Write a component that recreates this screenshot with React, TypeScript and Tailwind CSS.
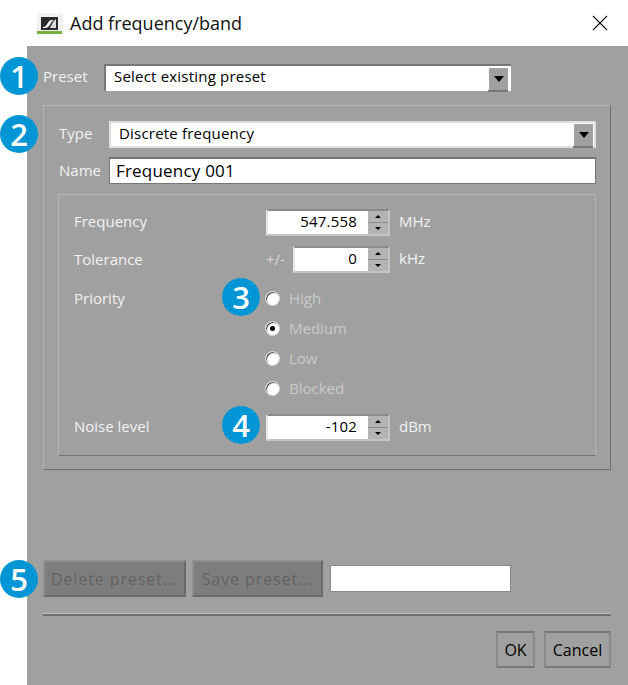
const FONT = "font-['Open_Sans','Noto_Sans',sans-serif]";

function Badge({ n, className }: { n: number; className: string }) {
  return (
    <div
      className={`absolute flex h-[38px] w-[38px] items-center justify-center rounded-full bg-[#0095d5] text-[31px] font-semibold leading-none text-white ${className}`}
    >
      {n}
    </div>
  );
}

function Arrow({ up, big }: { up?: boolean; big?: boolean }) {
  return (
    <svg width={big ? 10 : 6} height={big ? 6 : 3} viewBox="0 0 10 6" preserveAspectRatio="none" className="block">
      <polygon points={up ? "5,0 10,6 0,6" : "0,0 10,0 5,6"} fill="#000" />
    </svg>
  );
}

function Combo({ value, className, textClass }: { value: string; className: string; textClass: string }) {
  return (
    <div className={`flex items-center bg-white ${className}`}>
      <span className={`flex-1 text-[15px] tracking-[0.2px] text-black ${textClass}`}>{value}</span>
      <div className="flex h-[23px] w-[20px] items-center justify-center border-t border-l border-t-white border-l-white bg-[#a0a0a0] shadow-[0_2px_0_#777]">
        <Arrow big />
      </div>
    </div>
  );
}

function Spin({ value, unit, width }: { value: string; unit: string; width: string }) {
  return (
    <div className="flex h-[27px] items-center">
      <div className={`flex h-[27px] items-stretch border-2 border-[#c4c4c4] border-t-[#8a8a8a] border-l-[#e6e6e6] ${width}`}>
        <div className="flex flex-1 items-center justify-end bg-white pb-[2px] pr-[11px] text-[15px] tracking-[0.2px] text-black">{value}</div>
        <div className="flex w-[20px] flex-col gap-px bg-[#8c8c8c]">
          <div className="flex flex-1 items-center justify-center bg-[#b4b4b4]">
            <Arrow up />
          </div>
          <div className="flex flex-1 items-center justify-center bg-[#b4b4b4]">
            <Arrow />
          </div>
        </div>
      </div>
      <span className="ml-[9px] pb-[2px] text-[15px] text-[#f2f2f2]">{unit}</span>
    </div>
  );
}

function Radio({ label, checked }: { label: string; checked?: boolean }) {
  return (
    <div className="flex h-[30px] items-center">
      <div className="ml-[-1px] mr-px flex h-[15px] w-[15px] items-center justify-center rounded-full border border-[#d8d8d8] bg-white shadow-[inset_1px_1px_0_#4a4a4a]">
        {checked && <div className="h-[5px] w-[5px] rounded-full bg-black" />}
      </div>
      <span className="ml-[8px] text-[15px] text-[#c9c9c9]">{label}</span>
    </div>
  );
}

function DisabledButton({ label, width }: { label: string; width: string }) {
  return (
    <div
      className={`flex h-[37px] items-center justify-center border-2 border-[#8f8f8f] border-r-[#6a6a6a] border-b-[#6a6a6a] bg-[#7d7d7d] text-[16px] tracking-[0.9px] text-[#636363] ${width}`}
    >
      {label}
    </div>
  );
}

function OkButton({ label, width }: { label: string; width: string }) {
  return (
    <div
      className={`flex h-[37px] items-center justify-center border-2 border-[#777] border-r-[#8a8a8a] border-l-[#8a8a8a] bg-[#a0a0a0] text-[16px] text-black ${width}`}
    >
      {label}
    </div>
  );
}

export default function App() {
  return (
    <div className={`relative flex h-[685px] w-[628px] flex-col overflow-hidden bg-white ${FONT}`}>
      {/* title bar */}
      <div className="flex h-[46px] flex-none items-center pl-[37px] pr-[20px]">
        <svg width="26" height="22" viewBox="0 0 26 22" className="mb-[-1px]">
          <rect x="0" y="0" width="26" height="18" fill="#f2f2f2" />
          <rect x="4" y="4" width="17" height="13" fill="#2b2b2b" />
          <path d="M6 14 C11 14 10 7 15 7 L18 7 C13 7 14 15 8 15 L6 15 Z" fill="#f4f4f4" />
          <path d="M16 9 L19 6 L19 15 L13 15 Z" fill="#d8d8d8" />
          <rect x="0" y="18" width="25" height="3" fill="#76b043" />
        </svg>
        <span className="ml-[7px] flex-1 text-[18px] leading-none text-[#111]">Add frequency/band</span>
        <svg width="16" height="16" viewBox="0 0 16 16">
          <path d="M1 1 L15 15 M15 1 L1 15" stroke="#111" strokeWidth="1.1" />
        </svg>
      </div>

      {/* dialog body */}
      <div className="relative ml-[27px] flex-1 bg-[#a0a0a0] pt-[18px] pl-[16px] pr-[17px] text-[15px] text-[#f2f2f2]">
        {/* preset */}
        <div className="flex h-[26px] items-center">
          <span className="w-[61px] pb-[2px]">Preset</span>
          <Combo
            value="Select existing preset"
            className="h-[27px] w-[407px] border-t-2 border-l-2 border-t-[#777] border-l-[#777] pr-[3px]"
            textClass="pl-[8px] pb-[3px]"
          />
        </div>

        {/* group */}
        <div className="mt-[15px] h-[365px] border border-[#b4b4b4] border-r-[#707070] border-b-[#707070] pt-[15px] pl-[14px] pr-[14px]">
          <div className="flex h-[26px] items-center">
            <span className="w-[51px] pl-[1px] pb-[1px]">Type</span>
            <Combo
              value="Discrete frequency"
              className="h-[27px] flex-1 border-2 border-[#e0e0e0] border-t-[#dedede] pr-[1px]"
              textClass="pl-[8px] pb-[2px]"
            />
          </div>
          <div className="mt-[10px] flex h-[27px] items-center">
            <span className="w-[51px] pl-[1px]">Name</span>
            <div className="flex h-[27px] flex-1 items-center border border-t-2 border-[#777] bg-white pl-[6px] text-[17px] tracking-[0.2px] text-black">
              Frequency 001
            </div>
          </div>

          {/* frequency settings */}
          <div className="mt-[10px] h-[262px] border border-[#b4b4b4] border-b-[#707070] border-r-[#b4b4b4] pl-[15px]">
            <div className="mt-[14px] flex h-[27px] items-center">
              <span className="w-[192px] pb-[2px]">Frequency</span>
              <Spin value="547.558" unit="MHz" width="w-[124px]" />
            </div>
            <div className="mt-[10px] flex h-[27px] items-center">
              <span className="w-[192px]">Tolerance</span>
              <span className="w-[27px] text-[#d8d8d8]">+/-</span>
              <Spin value="0" unit="kHz" width="w-[97px]" />
            </div>
            <div className="mt-[10px] flex items-start">
              <span className="mt-[4px] w-[192px] leading-[22px]">Priority</span>
              <div className="flex flex-col">
                <Radio label="High" />
                <Radio label="Medium" checked />
                <Radio label="Low" />
                <Radio label="Blocked" />
              </div>
            </div>
            <div className="mt-[11px] flex h-[27px] items-center">
              <span className="w-[192px] pb-[2px]">Noise level</span>
              <Spin value="-102" unit="dBm" width="w-[124px]" />
            </div>
          </div>
        </div>

        {/* preset actions */}
        <div className="mt-[90px] flex h-[37px] items-center">
          <DisabledButton label="Delete preset..." width="w-[143px]" />
          <div className="ml-[6px]">
            <DisabledButton label="Save preset..." width="w-[131px]" />
          </div>
          <div className="ml-[7px] h-[27px] w-[181px] border border-[#8a8a8a] bg-white" />
        </div>

        <div className="mt-[17px] h-[2px] bg-[#707070] shadow-[0_-1px_0_#bdbdbd]" />

        <div className="mt-[15px] flex justify-end gap-[9px]">
          <OkButton label="OK" width="w-[39px]" />
          <OkButton label="Cancel" width="w-[67px]" />
        </div>
      </div>

      <Badge n={1} className="left-0 top-[57px]" />
      <Badge n={2} className="left-0 top-[115px]" />
      <Badge n={3} className="left-[222px] top-[278px]" />
      <Badge n={4} className="left-[222px] top-[406px]" />
      <Badge n={5} className="left-0 top-[560px]" />
    </div>
  );
}
